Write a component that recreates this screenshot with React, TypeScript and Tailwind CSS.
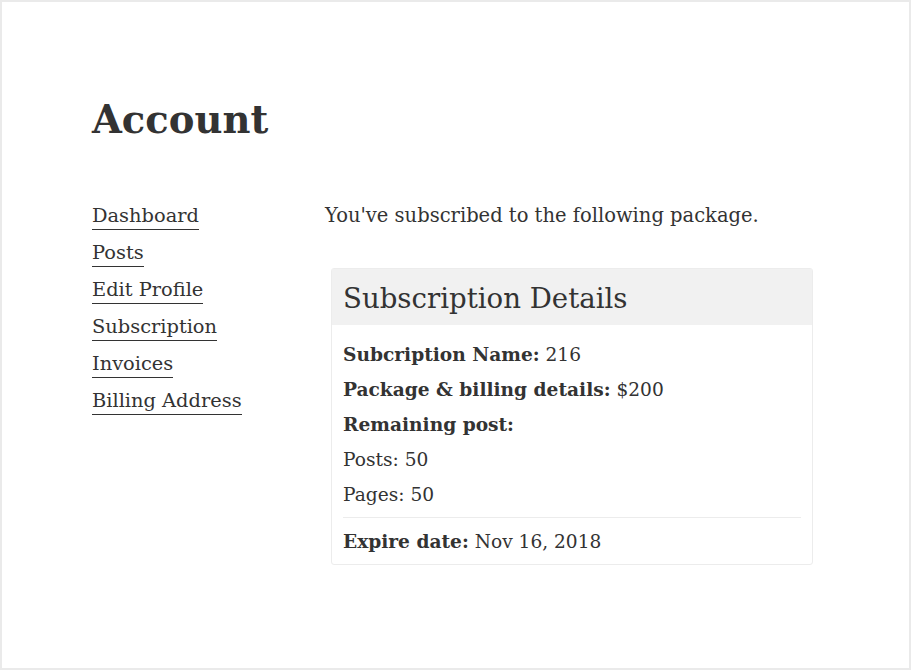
import React from "react";

const links = ["Dashboard", "Posts", "Edit Profile", "Subscription", "Invoices", "Billing Address"];

export default function App() {
  return (
    <div
      className="w-[911px] h-[670px] border-2 border-[#eaeaea] bg-white text-[#333333] overflow-hidden"
      style={{ fontFamily: '"DejaVu Serif", "Liberation Serif", serif' }}
    >
      <div className="pl-[90px] pt-[93px]">
        <h1 className="text-[38.5px] font-bold leading-[50px] m-0">Account</h1>
        <div className="flex mt-[59px]">
          <ul className="w-[233px] flex flex-col gap-[13px]">
            {links.map((l) => (
              <li key={l} className="leading-[24px] text-[19.4px]">
                <a className="border-b border-[#333333] pb-[2px]">{l}</a>
              </li>
            ))}
          </ul>
          <div className="flex flex-col">
            <p className="text-[19.5px] leading-[24px] m-0">You've subscribed to the following package.</p>
            <div className="ml-[6px] mt-[40px] w-[482px] border border-[#ececec] rounded-[3px]">
              <div className="bg-[#f1f1f1] h-[56px] flex items-center px-[11px]">
                <h2 className="text-[27.6px] leading-[34px] pt-[3px]">Subscription Details</h2>
              </div>
              <div className="px-[11px] pt-[12px] pb-[5px] text-[18.6px]">
                <div className="leading-[35px]"><b>Subcription Name:</b> 216</div>
                <div className="leading-[35px]"><b>Package &amp; billing details:</b> $200</div>
                <div className="leading-[35px]"><b>Remaining post:</b></div>
                <div className="leading-[35px]">Posts: 50</div>
                <div className="leading-[35px]">Pages: 50</div>
                <div className="border-t border-[#ececec] mt-[5px] pt-[6px] leading-[35px]"><b>Expire date:</b> Nov 16, 2018</div>
              </div>
            </div>
          </div>
        </div>
      </div>
    </div>
  );
}
